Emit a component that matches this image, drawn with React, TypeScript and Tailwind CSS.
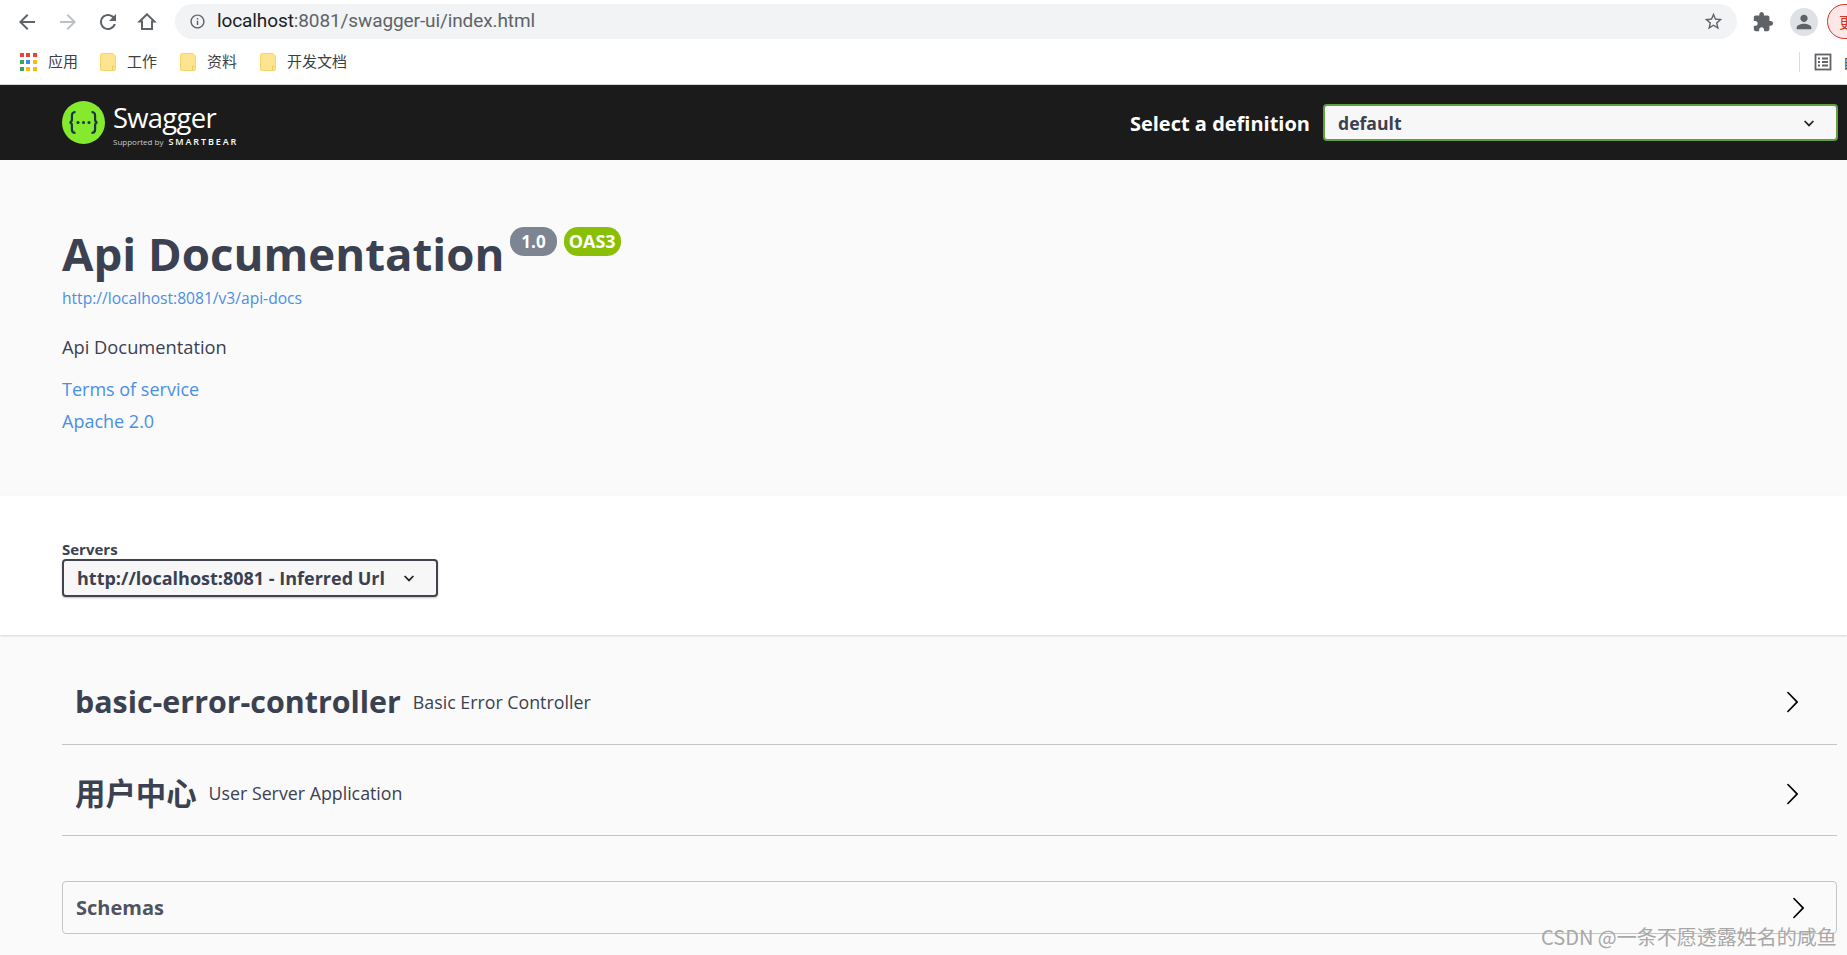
import React from 'react';

const Mi = ({ d, className }: { d: string; className: string }) => (
  <svg viewBox="0 0 24 24" className={className} fill="currentColor">
    <path d={d} />
  </svg>
);

const ICONS = {
  back: 'M20 11H7.83l5.59-5.59L12 4l-8 8 8 8 1.41-1.41L7.83 13H20v-2z',
  reload:
    'M17.65 6.35C16.2 4.9 14.21 4 12 4c-4.42 0-7.99 3.58-7.99 8s3.57 8 7.99 8c3.73 0 6.84-2.55 7.73-6h-2.08c-.82 2.33-3.04 4-5.65 4-3.31 0-6-2.69-6-6s2.69-6 6-6c1.66 0 3.14.69 4.22 1.78L13 11h7V4l-2.35 2.35z',
  info: 'M11 7h2v2h-2zm0 4h2v6h-2zm1-9C6.48 2 2 6.48 2 12s4.48 10 10 10 10-4.48 10-10S17.52 2 12 2zm0 18c-4.41 0-8-3.59-8-8s3.59-8 8-8 8 3.59 8 8-3.59 8-8 8z',
  star: 'M22 9.24l-7.19-.62L12 2 9.19 8.63 2 9.24l5.46 4.73L5.82 21 12 17.27 18.18 21l-1.63-7.03L22 9.24zM12 15.4l-3.76 2.27 1-4.28-3.32-2.88 4.38-.38L12 6.1l1.71 4.04 4.38.38-3.32 2.88 1 4.28L12 15.4z',
  ext: 'M20.5 11H19V7c0-1.1-.9-2-2-2h-4V3.5C13 2.12 11.88 1 10.5 1S8 2.12 8 3.5V5H4c-1.1 0-1.99.9-1.99 2v3.8H3.5c1.49 0 2.7 1.21 2.7 2.7s-1.21 2.7-2.7 2.7H2V20c0 1.1.9 2 2 2h3.8v-1.5c0-1.49 1.21-2.7 2.7-2.7 1.49 0 2.7 1.21 2.7 2.7V22H17c1.1 0 2-.9 2-2v-4h1.5c1.38 0 2.5-1.12 2.5-2.5S21.88 11 20.5 11z',
  person: 'M12 12c2.21 0 4-1.79 4-4s-1.79-4-4-4-4 1.79-4 4 1.79 4 4 4zm0 2c-2.67 0-8 1.34-8 4v2h16v-2c0-2.66-5.33-4-8-4z',
};

// swagger-ui's own arrow, the big one next to each tag
const Arrow = ({ className }: { className?: string }) => (
  <svg viewBox="0 0 20 20" className={className} fill="#000">
    <path d="M13.25 10L6.109 2.58a.697.697 0 0 1 0-.979.68.68 0 0 1 .969 0l7.83 7.908a.697.697 0 0 1 0 .979l-7.83 7.908a.68.68 0 0 1-.969 0 .697.697 0 0 1 0-.979L13.25 10z" />
  </svg>
);

const SmallDown = () => (
  <svg viewBox="0 0 20 20" className="w-[16px] h-[16px]" fill="none" stroke="#222" strokeWidth="2.2">
    <path d="M4.5 7.5 10 13l5.5-5.5" />
  </svg>
);

const Folder = () => (
  <svg viewBox="0 0 16 18" className="w-[16px] h-[18px] shrink-0">
    <path d="M2 .5h11l2.5 2.5v13a1.5 1.5 0 0 1-1.5 1.5H2A1.5 1.5 0 0 1 .5 16V2A1.5 1.5 0 0 1 2 .5z" fill="#fde58f" stroke="#f3d46f" />
    <path d="M12.5 17.5v-4h3" fill="none" stroke="#eecb62" />
  </svg>
);

const AppsGrid = () => {
  const colors = ['#ea4335', '#ea4335', '#ea4335', '#34a853', '#4285f4', '#fbbc05', '#34a853', '#fbbc05', '#fbbc05'];
  return (
    <div className="grid grid-cols-3 gap-[3px] w-[16px] shrink-0">
      {colors.map((c, i) => (
        <span key={i} className="w-[4px] h-[4px]" style={{ backgroundColor: c }} />
      ))}
    </div>
  );
};

const Bookmark = ({ label, className }: { label: string; className: string }) => (
  <div className={`flex items-center ${className}`}>
    <Folder />
    <span className="ml-[11px] text-[15px] text-[#3c4043]">{label}</span>
  </div>
);

const ChromeBars = () => (
  <div className="bg-white h-[85px] border-b border-[#d5d6d8]">
    <div className="h-[39px] flex items-end pl-[15px]">
      <div className="flex items-center h-[35px] text-[#5f6368]">
        <Mi d={ICONS.back} className="w-[24px] h-[24px]" />
        <Mi d={ICONS.back} className="w-[24px] h-[24px] ml-[17px] rotate-180 text-[#bdc1c6]" />
        <Mi d={ICONS.reload} className="w-[24px] h-[24px] ml-[16px]" />
        <svg viewBox="0 0 24 24" className="w-[24px] h-[24px] ml-[15px]" fill="none" stroke="currentColor" strokeWidth="2">
          <path d="M12 4.3 4.6 11.5H7V19h10v-7.5h2.4z" />
        </svg>
      </div>
      <div className="ml-[16px] w-[1562px] shrink-0 h-[35px] rounded-full bg-[#f1f3f4] flex items-center pl-[14px] pr-[13px]">
        <Mi d={ICONS.info} className="w-[17px] h-[17px] text-[#5f6368] shrink-0" />
        <span className="ml-[11px] text-[19px] text-[#5f6368] font-['Roboto',sans-serif] tracking-[-0.1px]">
          <span className="text-[#202124]">localhost</span>:8081/swagger-ui/index.html
        </span>
        <Mi d={ICONS.star} className="w-[21px] h-[21px] ml-auto text-[#5f6368]" />
      </div>
      <div className="flex items-center h-[35px] shrink-0 text-[#5f6368]">
        <Mi d={ICONS.ext} className="w-[22px] h-[22px] ml-[15px]" />
        <div className="ml-[16px] w-[28px] h-[28px] rounded-full bg-[#dee1e6] flex items-center justify-center">
          <Mi d={ICONS.person} className="w-[22px] h-[22px]" />
        </div>
        <div className="ml-[9px] w-[40px] h-[35px] shrink-0 rounded-full border border-[#d93025] bg-[#fce8e6] pl-[11px] text-[15px] leading-[33px] text-[#d93025]">
          更
        </div>
      </div>
    </div>
    <div className="h-[45px] flex items-center pl-[20px] overflow-hidden">
      <AppsGrid />
      <span className="ml-[12px] text-[15px] text-[#3c4043]">应用</span>
      <Bookmark label="工作" className="ml-[22px]" />
      <Bookmark label="资料" className="ml-[23px]" />
      <Bookmark label="开发文档" className="ml-[23px]" />
      <div className="ml-auto w-px h-[20px] bg-[#dadce0]" />
      <svg viewBox="0 0 18 18" className="ml-[14px] w-[18px] h-[18px] shrink-0" fill="none" stroke="#5f6368" strokeWidth="1.8">
        <rect x="1.5" y="1.5" width="15" height="15" />
        <path d="M4 5.5h2M8 5.5h6M4 9h2M8 9h6M4 12.5h2M8 12.5h6" />
      </svg>
      <span className="ml-[11px] w-[4px] overflow-hidden text-[14px] leading-[20px] text-[#3c4043] shrink-0">自</span>
    </div>
  </div>
);

const TopBar = () => (
  <div className="h-[75px] bg-[#1b1b1b] flex items-center pl-[62px] pr-[9px] font-['Open_Sans',sans-serif]">
    <div className="flex items-center">
      <svg viewBox="0 0 43 43" className="w-[43px] h-[43px] shrink-0">
        <circle cx="21.5" cy="21.5" r="21.5" fill="#85ea2d" />
        <path d="M13.5 11c-2.6 0-3.6 1.2-3.6 3.4v4.4c0 1.6-.9 2.5-2.3 2.7 1.4.2 2.3 1.1 2.3 2.7v4.4c0 2.2 1 3.4 3.6 3.4M29.5 11c2.6 0 3.6 1.2 3.6 3.4v4.4c0 1.6.9 2.5 2.3 2.7-1.4.2-2.3 1.1-2.3 2.7v4.4c0 2.2-1 3.4-3.6 3.4" fill="none" stroke="#173647" strokeWidth="2.2" />
        <circle cx="16" cy="21.5" r="1.5" fill="#173647" />
        <circle cx="21.5" cy="21.5" r="1.5" fill="#173647" />
        <circle cx="27" cy="21.5" r="1.5" fill="#173647" />
      </svg>
      <div className="ml-[8px] flex flex-col text-white mt-[3px]">
        <span className="text-[27.4px] leading-[34px] tracking-[-0.7px]">Swagger</span>
        <span className="mt-[2px] flex items-center leading-[10px]">
          <span className="text-[8px] text-[#c9c9c9]">Supported by</span>
          <span className="ml-[5px] text-[9px] tracking-[1.9px] font-semibold">SMARTBEAR</span>
        </span>
      </div>
    </div>
    <span className="ml-auto pt-[2px] text-[20px] font-bold text-white">Select a definition</span>
    <div className="ml-[13px] w-[515px] h-[37px] rounded-[4px] border-2 border-[#62a03f] bg-[#f7f7f7] flex items-center justify-between pl-[13px] pr-[19px]">
      <span className="pt-[2px] text-[17.6px] font-bold text-[#3b4151]">default</span>
      <SmallDown />
    </div>
  </div>
);

const Info = () => (
  <div className="h-[336px] bg-[#fafafa] pl-[62px] pt-[62px] font-['Open_Sans',sans-serif]">
    <div className="flex items-start h-[62px]">
      <h1 className="text-[45.6px] leading-[62px] font-bold text-[#3b4151]">Api Documentation</h1>
      <span className="ml-[6px] mt-[5px] h-[29px] px-[11px] rounded-[14px] bg-[#7d8492] text-white text-[17px] leading-[29px] font-bold">1.0</span>
      <span className="ml-[7px] mt-[5px] h-[29px] px-[5px] rounded-[14px] bg-[#89bf04] text-white text-[18px] leading-[29px] font-bold">OAS3</span>
    </div>
    <a className="block mt-[3px] text-[15.6px] leading-[22px] text-[#4990e2]">http://localhost:8081/v3/api-docs</a>
    <p className="mt-[26px] text-[18.3px] leading-[23px] text-[#3b4151]">Api Documentation</p>
    <a className="block mt-[19px] text-[18px] leading-[24px] text-[#4990e2]">Terms of service</a>
    <a className="block mt-[8px] text-[18px] leading-[24px] text-[#4990e2]">Apache 2.0</a>
  </div>
);

const Servers = () => (
  <div className="h-[139px] bg-white pl-[62px] pt-[44px] shadow-[0_1px_2px_rgba(0,0,0,0.15)] relative font-['Open_Sans',sans-serif]">
    <div className="text-[15px] leading-[18px] font-bold text-[#3b4151]">Servers</div>
    <div className="mt-[1px] w-[376px] h-[38px] rounded-[4px] border-2 border-[#41444e] bg-[#f7f7f7] shadow-[0_1px_2px_rgba(0,0,0,0.25)] flex items-center pl-[13px]">
      <span className="pt-[1px] text-[18px] font-bold text-[#3b4151]">http://localhost:8081 - Inferred Url</span>
      <span className="ml-[16px]"><SmallDown /></span>
    </div>
  </div>
);

const TagRow = ({ name, desc, className }: { name: string; desc: string; className: string }) => (
  <div className={`${className} border-b border-[#c3c5c9] flex items-center pl-[13px]`}>
    <h3 className="text-[30.4px] font-bold text-[#3b4151] font-['Open_Sans','Noto_Sans_CJK_SC',sans-serif]">{name}</h3>
    <span className="ml-[12px] text-[17.8px] text-[#3b4151]">{desc}</span>
    <Arrow className="ml-auto mr-[33px] w-[24px] h-[24px]" />
  </div>
);

export default function App() {
  return (
    <div className="relative w-[1847px] h-[955px] overflow-hidden bg-[#fafafa] font-['Noto_Sans_CJK_SC',sans-serif]">
      <ChromeBars />
      <TopBar />
      <Info />
      <Servers />
      <div className="pl-[62px] pr-[10px] font-['Open_Sans','Noto_Sans_CJK_SC',sans-serif]">
        <div className="pt-[22px]">
          <TagRow name="basic-error-controller" desc="Basic Error Controller" className="h-[88px] pt-[3px]" />
          <TagRow name="用户中心" desc="User Server Application" className="h-[91px] pt-[7px]" />
        </div>
        <div className="mt-[45px] h-[53px] rounded-[4px] border border-[#c3c5c9] flex items-center pl-[13px] pt-[1px]">
          <span className="text-[20px] font-bold text-[#505460]">Schemas</span>
          <Arrow className="ml-auto mr-[26px] w-[24px] h-[24px]" />
        </div>
      </div>
      <div className="absolute left-[1541px] top-[923px] text-[20px] leading-[28px] text-[#a8a8a8] font-['Noto_Sans_CJK_SC',sans-serif] whitespace-nowrap">
        CSDN @一条不愿透露姓名的咸鱼
      </div>
    </div>
  );
}
